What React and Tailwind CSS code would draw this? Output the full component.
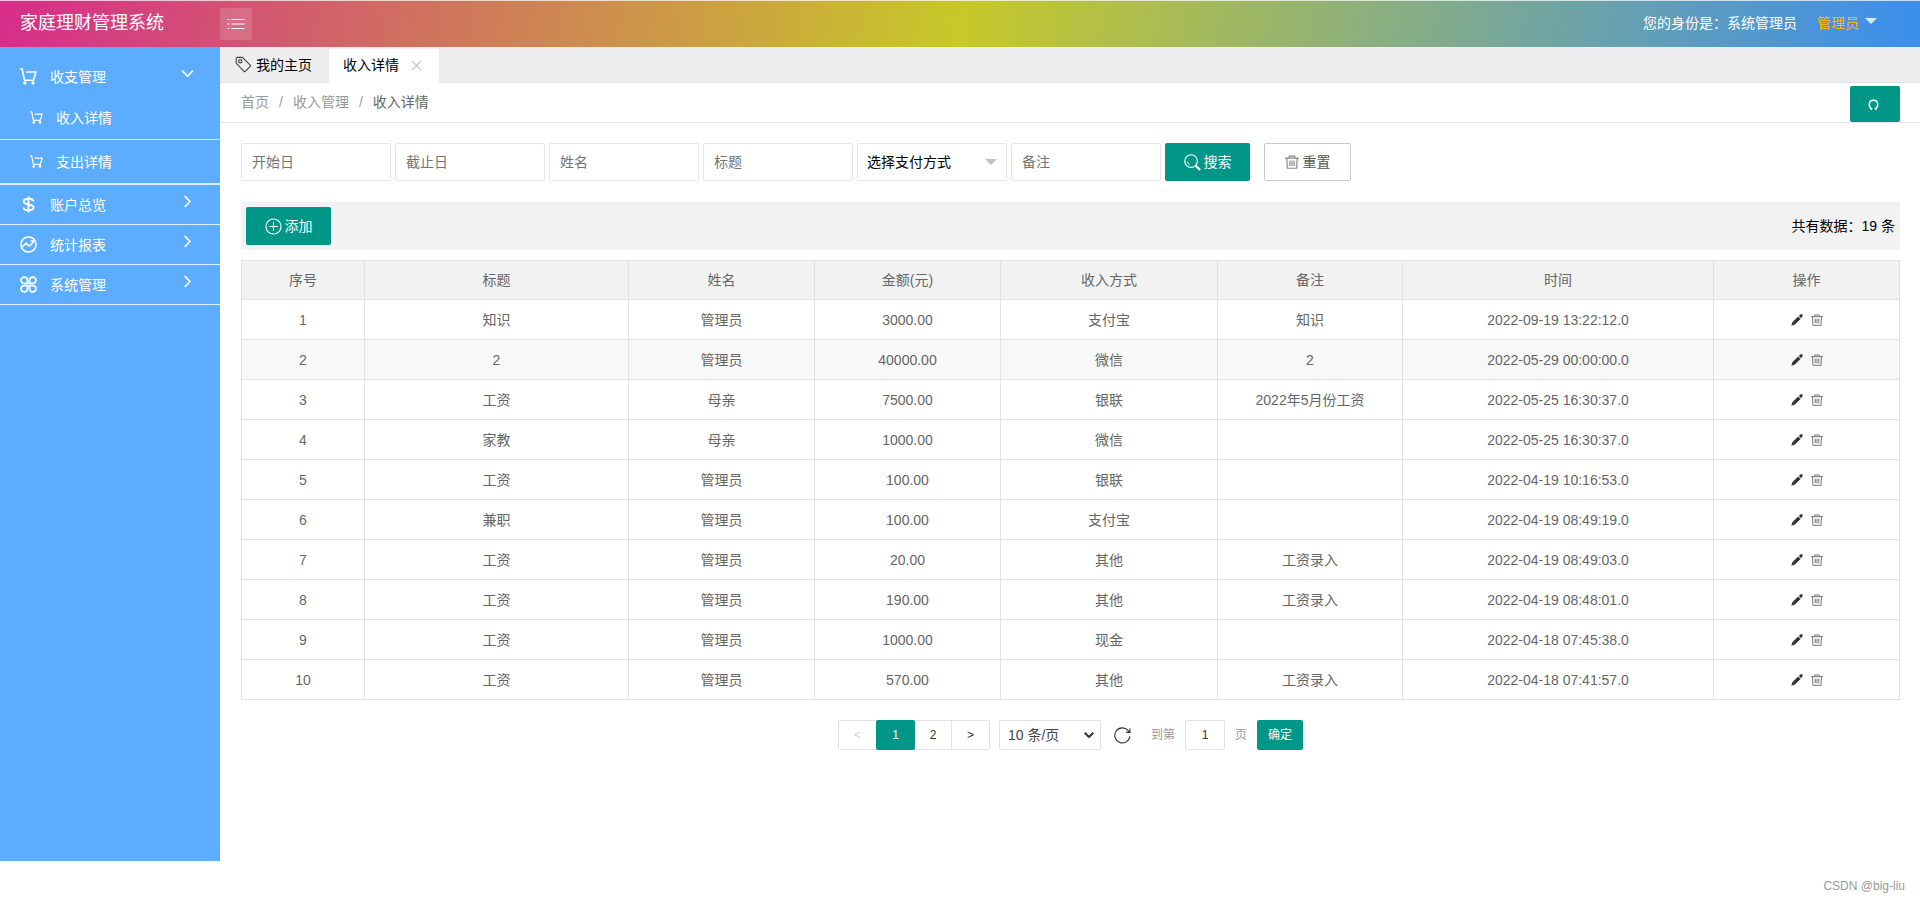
import { useState } from 'react';

const FONT =
  "font-['Liberation_Sans','Noto_Sans_CJK_SC',sans-serif] text-sm text-black";

const RECORDS = [
  ['知识', '管理员', '3000.00', '支付宝', '知识', '2022-09-19 13:22:12.0'],
  ['2', '管理员', '40000.00', '微信', '2', '2022-05-29 00:00:00.0'],
  ['工资', '母亲', '7500.00', '银联', '2022年5月份工资', '2022-05-25 16:30:37.0'],
  ['家教', '母亲', '1000.00', '微信', '', '2022-05-25 16:30:37.0'],
  ['工资', '管理员', '100.00', '银联', '', '2022-04-19 10:16:53.0'],
  ['兼职', '管理员', '100.00', '支付宝', '', '2022-04-19 08:49:19.0'],
  ['工资', '管理员', '20.00', '其他', '工资录入', '2022-04-19 08:49:03.0'],
  ['工资', '管理员', '190.00', '其他', '工资录入', '2022-04-19 08:48:01.0'],
  ['工资', '管理员', '1000.00', '现金', '', '2022-04-18 07:45:38.0'],
  ['工资', '管理员', '570.00', '其他', '工资录入', '2022-04-18 07:41:57.0'],
];

const COLUMNS = [
  ['序号', 'w-[123px]'],
  ['标题', 'w-[264px]'],
  ['姓名', 'w-[186px]'],
  ['金额(元)', 'w-[186px]'],
  ['收入方式', 'w-[217px]'],
  ['备注', 'w-[185px]'],
  ['时间', 'w-[311px]'],
  ['操作', 'w-[186px]'],
];

function Icon({ className, children, stroke = 1.2 }) {
  return (
    <svg
      viewBox="0 0 18 18"
      fill="none"
      stroke="currentColor"
      strokeWidth={stroke}
      aria-hidden="true"
      className={`shrink-0 ${className}`}
    >
      {children}
    </svg>
  );
}

function Cart({ className }) {
  return (
    <Icon className={className} stroke={1.7}>
      <path d="M.8 1.2h1.500L4.800 13h9.400L16.800 4.300H7" strokeLinejoin="round" strokeLinecap="round" />
      <circle cx="5.200" cy="15.800" r="1.800" fill="currentColor" stroke="none" />
      <circle cx="13.800" cy="15.800" r="1.800" fill="currentColor" stroke="none" />
    </Icon>
  );
}

function Dollar({ className }) {
  return (
    <Icon className={className} stroke={2}>
      <path d="M9 .5v17M14.300 5.600C14 3.800 12 2.900 9 2.900S3.900 4 3.900 5.900c0 4.100 10.500 2 10.500 6.100 0 2-2.200 3.200-5.400 3.200s-5.200-1.100-5.400-3" />
    </Icon>
  );
}

function Trend({ className }) {
  return (
    <Icon className={className} stroke={1.6}>
      <circle cx="9" cy="9" r="8" />
      <path d="M2 12l4.500-4.500 3.300 3.300 5-5.300M11.200 5.300h3.800" />
    </Icon>
  );
}

function Clover({ className }) {
  return (
    <Icon className={className} stroke={1.900}>
      <path d="M7.900 7.900H4.600a3.400 3.400 0 1 1 3.300-3.400zM10.100 7.900h3.300a3.400 3.400 0 1 0-3.300-3.400zM7.900 10.100H4.600a3.400 3.400 0 1 0 3.300 3.400zM10.100 10.100h3.300a3.400 3.400 0 1 1-3.300 3.400z" />
    </Icon>
  );
}

function Tag({ className }) {
  return (
    <Icon className={className}>
      <path d="M1.300 2.500v5.200l8.300 8.600c.4.400.9.400 1.300 0l5.300-5.300c.4-.4.4-.9 0-1.300L7.700 1.500H2.300c-.6 0-1 .4-1 1z" />
      <circle cx="5.600" cy="5.600" r="1.700" />
    </Icon>
  );
}

function Chevron({ className, down }) {
  return (
    <Icon className={className} stroke={2.200}>
      <path d={down ? 'M1.500 5L9 12.500 16.500 5' : 'M5 1.500L12.500 9 5 16.500'} />
    </Icon>
  );
}

function Trash({ className }) {
  return (
    <Icon className={className} stroke={1.500}>
      <path d="M0 4h18M5.500 3.800V1.500h7v2.300M2.400 4l.5 13h12.200l.5-13M6.300 7v7M9 7v7M11.700 7v7" />
    </Icon>
  );
}

function Pencil({ className }) {
  return (
    <svg viewBox="0 0 12 12" fill="currentColor" aria-hidden="true" className={`shrink-0 ${className}`}>
      <path d="M.3 11.700l1.200-3.600 5.700-5.500 2.300 2.300-5.700 5.500zM7.900 1.900L9.300.6c.7-.6 1.600-.6 2.100 0 .6.600.5 1.400-.1 2L10.100 4.200z" />
    </svg>
  );
}

function SideItem({ icon: Glyph, label }) {
  return (
    <li className="border-b border-white/80">
      <button type="button" className="flex h-[39px] w-full items-center pr-[26px] pl-5 text-left">
        <Glyph className="size-[17px]" />
        <span className="flex-1 pl-[13px]">{label}</span>
        <Chevron className="mb-[6px] size-[13px]" />
      </button>
    </li>
  );
}

function Sidebar() {
  return (
    <nav className="w-[220px] shrink-0 bg-[#5cadff] pt-[10px] text-white">
      <ul>
        <li className="border-b border-white/80">
          <button type="button" className="flex h-[39px] w-full items-center pr-[26px] pl-5 text-left">
            <Cart className="size-[17px]" />
            <span className="flex-1 pl-[13px]">收支管理</span>
            <Chevron down className="mb-[6px] size-[13px]" />
          </button>
          <ul>
            {['收入详情', '支出详情'].map((label) => (
              <li key={label} className="border-b border-white/80">
                <a href="#" className="flex h-[43px] items-center gap-[13px] pl-[30px]">
                  <Cart className="size-[13px]" />
                  {label}
                </a>
              </li>
            ))}
          </ul>
        </li>
        <SideItem icon={Dollar} label="账户总览" />
        <SideItem icon={Trend} label="统计报表" />
        <SideItem icon={Clover} label="系统管理" />
      </ul>
    </nav>
  );
}

function Header() {
  return (
    <header className="flex h-[47px] items-center border-t border-white/70 bg-[linear-gradient(100deg,#d62d8b,#c8c829,#3a8eef)] text-white">
      <h1 className="w-[220px] shrink-0 pb-[2px] pl-5 text-lg">家庭理财管理系统</h1>
      <button
        type="button"
        aria-label="折叠菜单"
        className="flex size-8 items-center justify-center rounded-xs bg-white/15"
      >
        <Icon className="size-[18px]">
          <path d="M.5 4.500h2M4.500 4.500h13M.5 9h2M4.500 9h13M.5 13.500h2M4.500 13.500h13" />
        </Icon>
      </button>
      <div className="ml-auto flex items-center pr-[43px] pb-[2px]">
        <span>您的身份是：系统管理员</span>
        <button type="button" className="ml-5 flex items-center gap-[6px] text-[#ffb800]">
          管理员
          <svg viewBox="0 0 12 6" aria-hidden="true" className="mb-1 h-[6px] w-3 fill-white/80">
            <path d="M0 0h12L6 6z" />
          </svg>
        </button>
      </div>
    </header>
  );
}

function TextField({ label }) {
  return (
    <input
      type="text"
      aria-label={label}
      placeholder={label}
      className="h-[38px] w-[150px] rounded-xs border border-[#e6e6e6] bg-white px-[10px] placeholder:text-[#757575]"
    />
  );
}

function SearchForm() {
  return (
    <form className="flex items-center gap-1" onSubmit={(e) => e.preventDefault()}>
      <TextField label="开始日" />
      <TextField label="截止日" />
      <TextField label="姓名" />
      <TextField label="标题" />
      <div className="relative">
        <select
          aria-label="选择支付方式"
          className="block h-[38px] w-[150px] appearance-none rounded-xs border border-[#e6e6e6] bg-white px-[9px]"
        >
          <option>选择支付方式</option>
          <option>支付宝</option>
          <option>微信</option>
          <option>银联</option>
          <option>现金</option>
          <option>其他</option>
        </select>
        <svg
          viewBox="0 0 12 6"
          aria-hidden="true"
          className="pointer-events-none absolute top-4 right-[10px] h-[6px] w-3 fill-[#c2c2c2]"
        >
          <path d="M0 0h12L6 6z" />
        </svg>
      </div>
      <TextField label="备注" />
      <button
        type="submit"
        className="flex h-[38px] w-[85px] items-center justify-center gap-[3px] rounded-xs bg-[#009688] text-white"
      >
        <Icon className="size-[17px]">
          <circle cx="7.500" cy="7.500" r="6.700" />
          <path d="M3.500 8a4 4 0 0 0 2.500 3.300" strokeWidth="1" />
          <path d="M12.300 12.300l4.700 4.700" strokeWidth="2.400" />
        </Icon>
        搜索
      </button>
      <button
        type="reset"
        className="ml-[10px] flex h-[38px] w-[87px] items-center justify-center gap-1 rounded-xs border border-[#c9c9c9] bg-white text-[#555]"
      >
        <Trash className="size-[14px] text-[#888]" />
        重置
      </button>
    </form>
  );
}

function RecordTable() {
  return (
    <table className="mt-[10px] w-full table-fixed border-collapse text-center text-[#666]">
      <thead>
        <tr className="h-[39px] bg-[#f2f2f2]">
          {COLUMNS.map(([name, width]) => (
            <th key={name} className={`border border-[#e2e2e2] font-normal ${width}`}>
              {name}
            </th>
          ))}
        </tr>
      </thead>
      <tbody>
        {RECORDS.map((record, i) => (
          <tr key={record[5] + i} className={i === 1 ? 'h-10 bg-[#f8f8f8]' : 'h-10'}>
            <td className="border border-[#e2e2e2]">{i + 1}</td>
            {record.map((value, j) => (
              <td key={j} className="border border-[#e2e2e2]">
                {value}
              </td>
            ))}
            <td className="border border-[#e2e2e2]">
              <div className="flex items-center justify-center gap-2">
                <button type="button" aria-label="编辑" className="text-[#333]">
                  <Pencil className="size-[12px]" />
                </button>
                <button type="button" aria-label="删除" className="text-[#777]">
                  <Trash className="size-3" />
                </button>
              </div>
            </td>
          </tr>
        ))}
      </tbody>
    </table>
  );
}

function Pagination() {
  return (
    <div className="mt-5 flex h-[30px] items-center justify-center text-xs text-[#333]">
      <div className="flex h-[30px] rounded-xs border border-[#e2e2e2]">
        <button type="button" disabled className="w-[37px] text-[#d2d2d2]">
          &lt;
        </button>
        <button type="button" className="-my-px w-[39px] rounded-xs bg-[#009688] text-white">
          1
        </button>
        <button type="button" className="w-[37px] border-r border-[#e2e2e2]">
          2
        </button>
        <button type="button" className="w-[37px]">
          &gt;
        </button>
      </div>
      <div className="relative ml-[9px]">
        <select
          aria-label="每页条数"
          className="block h-[30px] w-[102px] appearance-none rounded-xs border border-[#e2e2e2] bg-white px-2 text-sm text-[#444]"
        >
          <option>10 条/页</option>
          <option>20 条/页</option>
        </select>
        <svg
          viewBox="0 0 10 6"
          fill="none"
          stroke="#333"
          strokeWidth="2"
          aria-hidden="true"
          className="pointer-events-none absolute top-3 right-[7px] h-[6px] w-[10px]"
        >
          <path d="M.7.700L5 5 9.300.700" />
        </svg>
      </div>
      <button type="button" aria-label="刷新" className="ml-[13px]">
        <Icon className="size-[17px]">
          <path d="M16.800 9.800A8 8 0 1 1 14.800 3.600l1.700 1.900M16.900 1.500v4.200h-4.200" />
        </Icon>
      </button>
      <label className="ml-[20px] flex items-center gap-[10px] text-[#999]">
        到第
        <input
          type="text"
          defaultValue="1"
          className="h-[30px] w-10 rounded-xs border border-[#e2e2e2] bg-white text-center text-[#333]"
        />
        页
      </label>
      <button type="button" className="ml-[10px] h-[30px] w-[46px] rounded-xs bg-[#009688] text-white">
        确定
      </button>
    </div>
  );
}

export default function App() {
  const [open, setOpen] = useState(true);
  return (
    <div className={`flex min-h-screen flex-col bg-white ${FONT}`}>
      <Header />
      <div className="flex flex-1">
        <Sidebar />
        <main className="min-w-0 flex-1">
          <div className="flex h-9 items-stretch border-b border-[#e2e2e2] bg-[#eeeef0]">
            <button type="button" className="flex w-[109px] items-center gap-1 pl-[15px]">
              <Tag className="size-[17px] text-[#444]" />
              我的主页
            </button>
            {open && (
              <div className="mt-[2px] -mb-px flex w-[110px] items-center bg-white pb-[2px] pl-[14px]">
                收入详情
                <button type="button" aria-label="关闭" onClick={() => setOpen(false)} className="ml-3 text-[#c2c2c2]">
                  <Icon className="size-[11px]" stroke={2}>
                    <path d="M1.500 1.500l15 15M16.500 1.500l-15 15" />
                  </Icon>
                </button>
              </div>
            )}
          </div>
          <div className="flex h-10 items-center border-b border-[#e5e5e5] pr-5 pl-[21px] text-[#999]">
            <nav className="flex flex-1 gap-[10px] pb-[2px]">
              <a href="#">首页</a>
              <span>/</span>
              <a href="#">收入管理</a>
              <span>/</span>
              <a href="#" className="text-[#666]">收入详情</a>
            </nav>
            <button
              type="button"
              aria-label="刷新页面"
              className="mt-[3px] flex h-9 w-[50px] items-center justify-center rounded-xs bg-[#009688] pr-[3px] text-white"
            >
              <Icon className="size-[11px]" stroke={2.400}>
                <path d="M3.500 16.200h3.200C.5 13.500 0 2 9 2s8.500 11.500 2.300 14.200h3.200" />
              </Icon>
            </button>
          </div>
          <div className="pt-5 pr-5 pl-[21px]">
            <SearchForm />
            <div className="mt-[21px] flex h-12 items-center justify-between bg-[#f2f2f2] px-[5px]">
              <button
                type="button"
                className="flex h-[38px] w-[85px] items-center justify-center gap-[3px] rounded-xs bg-[#009688] text-white"
              >
                <Icon className="size-[17px]">
                  <circle cx="9" cy="9" r="8" />
                  <path d="M9 4.500v9M4.500 9h9" />
                </Icon>
                添加
              </button>
              <span>共有数据：19 条</span>
            </div>
            <RecordTable />
            <Pagination />
          </div>
        </main>
      </div>
      <footer className="flex h-[41px] items-center justify-end bg-white pt-2 pr-[15px] text-xs text-[#999]">
        CSDN @big-liu
      </footer>
    </div>
  );
}
